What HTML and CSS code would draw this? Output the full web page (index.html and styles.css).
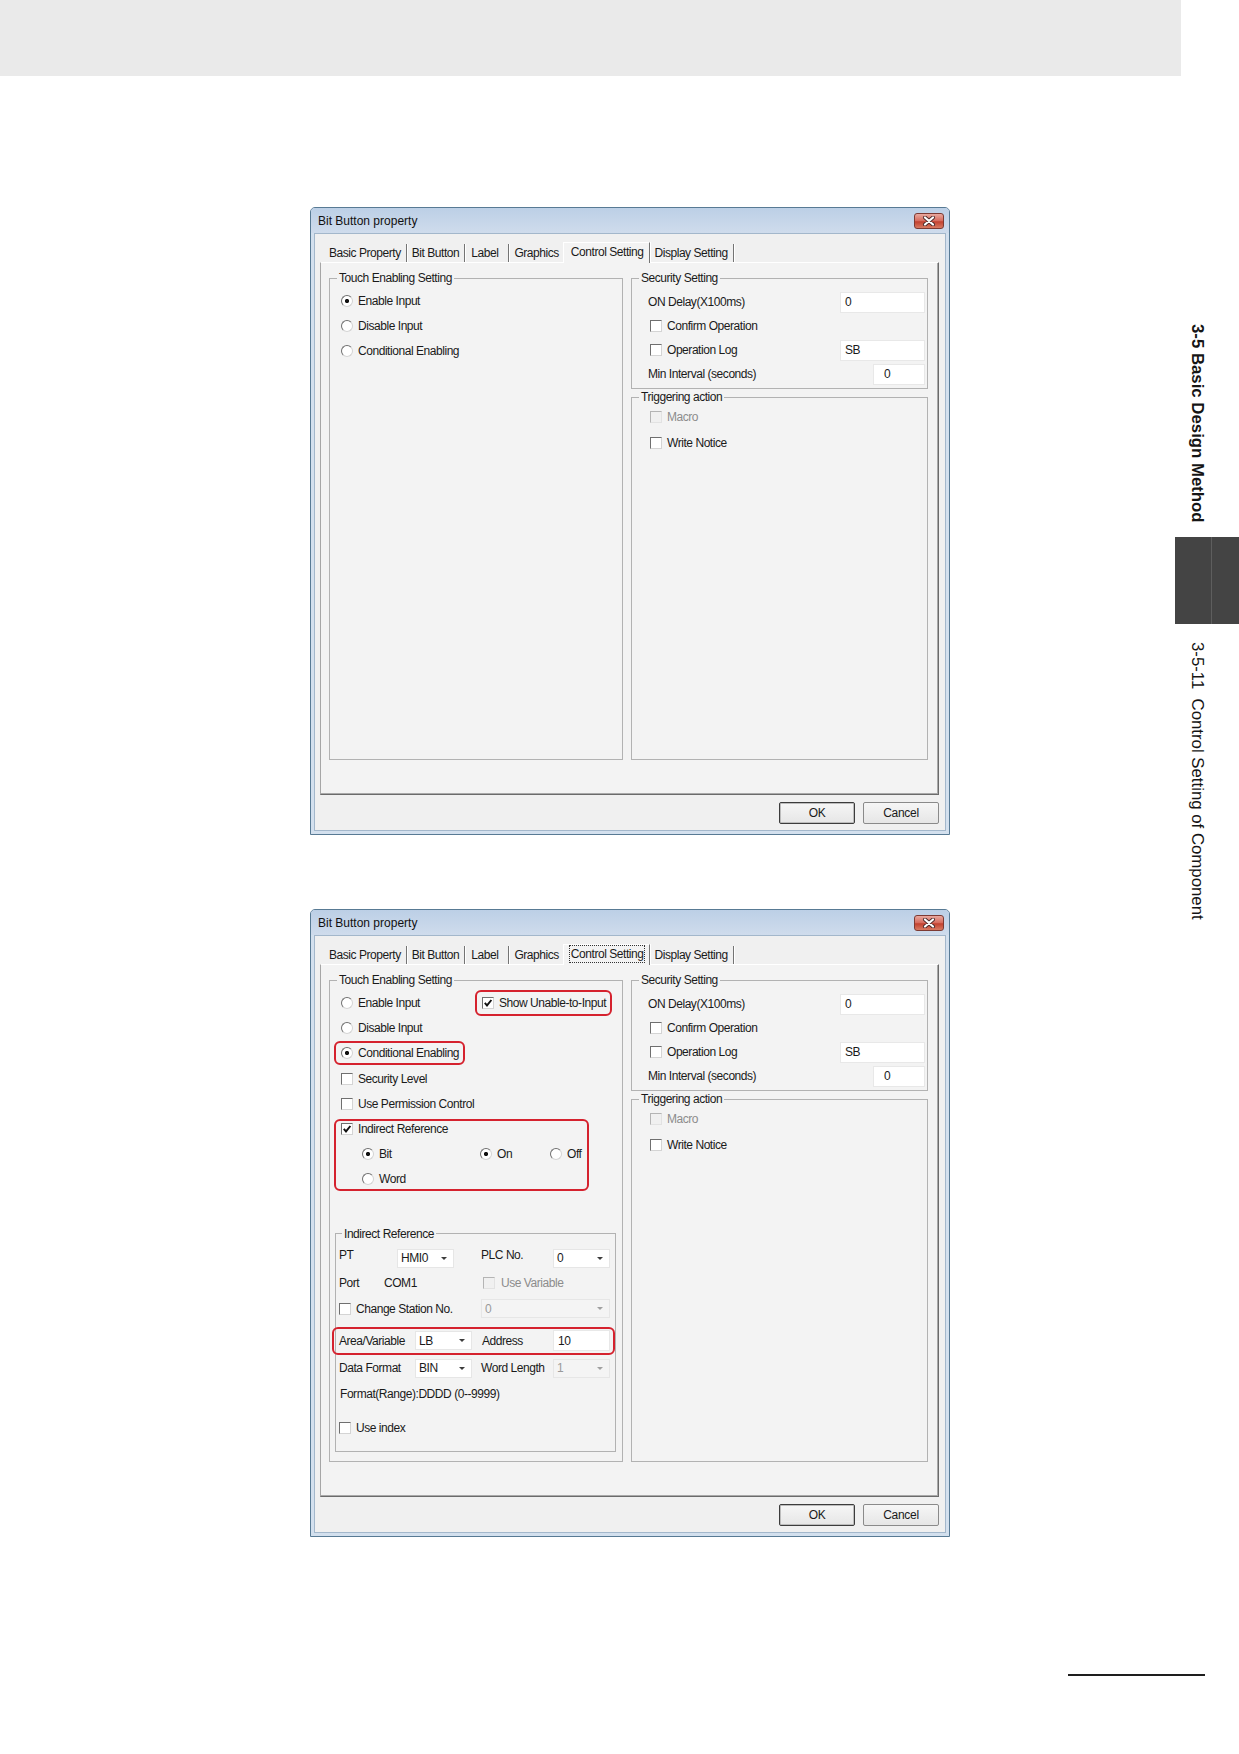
FILE: index.html
```html
<!DOCTYPE html>
<html lang="en">
<head>
    <meta charset="UTF-8">
    <title>3-5-11 Control Setting of Component</title>
    <link rel="stylesheet" href="styles.css">
</head>
<body>

    <div class="top-band"></div>

    <div class="page">
        <div class="main">

            <!-- Bit Button property: default state -->
            <div class="dialog">
                <div class="titlebar">
                    <span>Bit Button property</span>
                    <span class="close-btn">
                        <svg width="14" height="10" viewBox="0 0 14 10">
                            <path d="M3 1.5 L11 8.5 M11 1.5 L3 8.5" stroke="#4a2a2a" stroke-width="4" stroke-linecap="round"/>
                            <path d="M3 1.5 L11 8.5 M11 1.5 L3 8.5" stroke="#fff" stroke-width="2.2" stroke-linecap="round"/>
                        </svg>
                    </span>
                </div>
                <div class="dlg-body">
                    <div class="tabs">
                        <span class="tab">Basic Property</span>
                        <span class="tab">Bit Button</span>
                        <span class="tab t-label">Label</span>
                        <span class="tab">Graphics</span>
                        <span class="tab active"><span class="tab-label">Control Setting</span></span>
                        <span class="tab">Display Setting</span>
                    </div>
                    <div class="panel">
                        <fieldset class="group g-touch">
                            <legend>Touch Enabling Setting</legend>
                            <div class="gc">
                                <div class="row"><span class="rb on"></span>Enable Input</div>
                                <div class="row"><span class="rb"></span>Disable Input</div>
                                <div class="row"><span class="rb"></span>Conditional Enabling</div>
                            </div>
                        </fieldset>
                        <div class="right-col">
                            <fieldset class="group g-sec">
                                <legend>Security Setting</legend>
                                <div class="gc sec">
                                    <div class="row"><span class="lbl-sec">ON Delay(X100ms)</span><span class="field f-wide">0</span></div>
                                    <div class="row"><span class="cb"></span>Confirm Operation</div>
                                    <div class="row"><span class="lbl-sec"><span class="cb"></span>Operation Log</span><span class="field f-wide">SB</span></div>
                                    <div class="row"><span class="lbl-min">Min Interval (seconds)</span><span class="field f-min">0</span></div>
                                </div>
                            </fieldset>
                            <fieldset class="group g-trg">
                                <legend>Triggering action</legend>
                                <div class="gc trg">
                                    <div class="row off"><span class="cb dis"></span>Macro</div>
                                    <div class="row"><span class="cb"></span>Write Notice</div>
                                </div>
                            </fieldset>
                        </div>
                    </div>
                    <div class="buttons">
                        <span class="btn default">OK</span>
                        <span class="btn">Cancel</span>
                    </div>
                </div>
            </div>

            <!-- Bit Button property: conditional enabling -->
            <div class="dialog">
                <div class="titlebar">
                    <span>Bit Button property</span>
                    <span class="close-btn">
                        <svg width="14" height="10" viewBox="0 0 14 10">
                            <path d="M3 1.5 L11 8.5 M11 1.5 L3 8.5" stroke="#4a2a2a" stroke-width="4" stroke-linecap="round"/>
                            <path d="M3 1.5 L11 8.5 M11 1.5 L3 8.5" stroke="#fff" stroke-width="2.2" stroke-linecap="round"/>
                        </svg>
                    </span>
                </div>
                <div class="dlg-body">
                    <div class="tabs">
                        <span class="tab">Basic Property</span>
                        <span class="tab">Bit Button</span>
                        <span class="tab t-label">Label</span>
                        <span class="tab">Graphics</span>
                        <span class="tab active"><span class="tab-label focus">Control Setting</span></span>
                        <span class="tab">Display Setting</span>
                    </div>
                    <div class="panel">
                        <fieldset class="group g-touch">
                            <legend>Touch Enabling Setting</legend>
                            <div class="gc">
                                <div class="row">
                                    <span class="opt"><span class="rb"></span>Enable Input</span>
                                    <span class="hl hl-show"><span class="cb"><svg viewBox="0 0 10 10"><path d="M1.8 4.8 L4 7.4 L8.4 2" stroke="#111" stroke-width="1.9" fill="none"/></svg></span>Show Unable-to-Input</span>
                                </div>
                                <div class="row"><span class="rb"></span>Disable Input</div>
                                <div class="row"><span class="hl hl-cond"><span class="rb on"></span>Conditional Enabling</span></div>
                                <div class="row"><span class="cb"></span>Security Level</div>
                                <div class="row"><span class="cb"></span>Use Permission Control</div>
                                <div class="hl hl-block">
                                    <div class="row"><span class="cb"><svg viewBox="0 0 10 10"><path d="M1.8 4.8 L4 7.4 L8.4 2" stroke="#111" stroke-width="1.9" fill="none"/></svg></span>Indirect Reference</div>
                                    <div class="row sub">
                                        <span class="opt-bit"><span class="rb on"></span>Bit</span>
                                        <span class="opt-on"><span class="rb on"></span>On</span>
                                        <span><span class="rb"></span>Off</span>
                                    </div>
                                    <div class="row sub"><span class="rb"></span>Word</div>
                                </div>

                                <fieldset class="group g-ref">
                                    <legend>Indirect Reference</legend>
                                    <div class="ref">
                                        <div class="rrow r-pt">
                                            <span class="lbl lbl-pt">PT</span>
                                            <span class="combo">HMI0</span>
                                            <span class="lbl lbl-plc">PLC No.</span>
                                            <span class="combo">0</span>
                                        </div>
                                        <div class="rrow r-port">
                                            <span class="lbl-port">Port</span>
                                            <span class="lbl-com">COM1</span>
                                            <span class="off"><span class="cb dis"></span>Use Variable</span>
                                        </div>
                                        <div class="rrow r-station">
                                            <span class="lbl-station"><span class="cb"></span>Change Station No.</span>
                                            <span class="combo dis c-station">0</span>
                                        </div>
                                        <div class="rrow hl r-area">
                                            <span class="lbl-area">Area/Variable</span>
                                            <span class="combo">LB</span>
                                            <span class="lbl-addr">Address</span>
                                            <span class="field f-addr">10</span>
                                        </div>
                                        <div class="rrow r-data">
                                            <span class="lbl-area">Data Format</span>
                                            <span class="combo">BIN</span>
                                            <span class="lbl-wl">Word Length</span>
                                            <span class="combo dis">1</span>
                                        </div>
                                        <div class="rrow r-fmt">Format(Range):DDDD (0--9999)</div>
                                        <div class="rrow r-index"><span class="cb"></span>Use index</div>
                                    </div>
                                </fieldset>
                            </div>
                        </fieldset>
                        <div class="right-col">
                            <fieldset class="group g-sec">
                                <legend>Security Setting</legend>
                                <div class="gc sec">
                                    <div class="row"><span class="lbl-sec">ON Delay(X100ms)</span><span class="field f-wide">0</span></div>
                                    <div class="row"><span class="cb"></span>Confirm Operation</div>
                                    <div class="row"><span class="lbl-sec"><span class="cb"></span>Operation Log</span><span class="field f-wide">SB</span></div>
                                    <div class="row"><span class="lbl-min">Min Interval (seconds)</span><span class="field f-min">0</span></div>
                                </div>
                            </fieldset>
                            <fieldset class="group g-trg">
                                <legend>Triggering action</legend>
                                <div class="gc trg">
                                    <div class="row off"><span class="cb dis"></span>Macro</div>
                                    <div class="row"><span class="cb"></span>Write Notice</div>
                                </div>
                            </fieldset>
                        </div>
                    </div>
                    <div class="buttons">
                        <span class="btn default">OK</span>
                        <span class="btn">Cancel</span>
                    </div>
                </div>
            </div>

        </div>

        <!-- Chapter index on the page edge -->
        <div class="side">
            <div class="side-title">3-5 Basic Design Method</div>
            <div class="side-mark"></div>
            <div class="side-sub">3-5-11  Control Setting of Component</div>
        </div>
    </div>

    <div class="footer">
        <div class="footer-rule"></div>
    </div>

</body>
</html>
```

FILE: styles.css
```css
/* Page */
body {
    margin: 0;
    font-family: "Liberation Sans", Arial, sans-serif;
    color: #1a1a1a;
    background: #fff;
}

.top-band {
    width: 1181px;
    height: 76px;
    background: #eaeaea;
}

.page {
    display: flex;
}

.main {
    width: 1175px;
    padding-top: 131px;
}

/* Chapter index */
.side {
    width: 64px;
    padding-top: 248px;
    display: flex;
    flex-direction: column;
}

.side-title,
.side-sub {
    align-self: flex-start;
    writing-mode: vertical-rl;
    font-size: 16.8px;
    line-height: 20px;
    margin-left: 12px;
    color: #151515;
    white-space: pre;
}

.side-title {
    font-weight: bold;
}

.side-mark {
    height: 87px;
    margin: 14px 0 18px;
    background: linear-gradient(to right, #444 36px, #5e5e5e 36px, #5e5e5e 37px, #444 37px);
}

.footer {
    padding: 137px 0 0 1068px;
}

.footer-rule {
    width: 137px;
    height: 2px;
    background: #1e1e1e;
}

/* Dialog window */
.dialog {
    width: 640px;
    height: 628px;
    margin-left: 310px;
    box-sizing: border-box;
    border: 1px solid #587a94;
    border-radius: 5px 5px 0 0;
    background: #d3e0ee;
    padding: 0 3px 3px;
    display: flex;
    flex-direction: column;
    font-size: 12px;
    letter-spacing: -0.45px;
}

.dialog + .dialog {
    margin-top: 74px;
}

.titlebar {
    height: 25px;
    margin: 0 -3px;
    padding: 0 5px 0 7px;
    display: flex;
    align-items: center;
    justify-content: space-between;
    border-radius: 4px 4px 0 0;
    background: linear-gradient(to bottom, #bccfe6, #cfdcec);
    font-size: 12px;
    letter-spacing: 0;
    color: #111;
}

.close-btn {
    width: 30px;
    height: 16px;
    box-sizing: border-box;
    display: flex;
    align-items: center;
    justify-content: center;
    border: 1px solid #7d3a33;
    border-radius: 3px;
    background: linear-gradient(to bottom, #e9a99f, #d6695b 50%, #c2412f 55%, #d87a62);
}

.dlg-body {
    flex: 1;
    background: #f0f0f0;
    border: 1px solid #a3b7cb;
    padding: 8px 6px 6px 5px;
    display: flex;
    flex-direction: column;
}

/* Tabs */
.tabs {
    display: flex;
    align-items: flex-end;
    height: 20px;
    padding-left: 4px;
}

.tab {
    height: 18px;
    display: flex;
    align-items: center;
    padding: 0 5px;
    border-right: 1px solid #747474;
    box-shadow: 1px 0 0 #fff;
    white-space: nowrap;
}

.tab.t-label {
    padding: 0 10px 0 6px;
}

.tab.active {
    height: 21px;
    margin: 0 -1px -1px -2px;
    padding: 0 6px 3px 7px;
    box-sizing: border-box;
    border-left: 1px solid #fff;
    border-top: 1px solid #fff;
    background: #f3f3f3;
    position: relative;
    z-index: 1;
}

.tab-label.focus {
    outline: 1px dotted #333;
    outline-offset: 1px;
}

.panel {
    height: 533px;
    box-sizing: border-box;
    border: 1px solid;
    border-color: #ffffff #6b6b6b #6b6b6b #a6a6a6;
    box-shadow: inset -1px -1px 0 #a9a9a9;
    background: #f3f3f3;
    padding: 8px 10px 0 8px;
    display: flex;
    gap: 8px;
}

/* Group boxes */
.group {
    margin: 0;
    padding: 0;
    min-width: 0;
    box-sizing: border-box;
    border: 1px solid #b2b2b2;
}

.group legend {
    margin-left: 7px;
    padding: 0 2px;
    line-height: 14px;
}

.g-touch {
    width: 294px;
    height: 489px;
}

.right-col {
    width: 297px;
    display: flex;
    flex-direction: column;
    gap: 1px;
}

.g-sec {
    height: 118px;
}

.g-trg {
    height: 370px;
}

.gc {
    padding: 3px 0 0 11px;
}

.gc.sec {
    padding: 5px 0 0 16px;
}

.gc.trg {
    padding: 0 0 0 16px;
}

.row {
    display: flex;
    align-items: center;
    height: 25.3px;
    white-space: nowrap;
}

.sec .row {
    height: 24px;
}

.trg .row {
    height: 26px;
}

.sec .cb,
.trg .cb {
    margin-left: 2px;
}

.off {
    color: #8c8c8c;
}

/* Check boxes and radio buttons */
.cb,
.rb {
    flex: none;
    width: 12px;
    height: 12px;
    box-sizing: border-box;
    margin-right: 5px;
    border: 1px solid;
    border-color: #6f6f6f #d4d4d4 #d4d4d4 #6f6f6f;
    background: #fff;
    display: inline-flex;
    vertical-align: middle;
}

.cb svg {
    width: 10px;
    height: 10px;
}

.rb {
    border-radius: 50%;
}

.rb.on {
    background: radial-gradient(circle, #111 0, #111 1.8px, #fff 2.4px);
}

.cb.dis {
    background: #f0f0f0;
    border-color: #b4b4b4 #e2e2e2 #e2e2e2 #b4b4b4;
}

/* Edit boxes */
.field {
    height: 21px;
    box-sizing: border-box;
    background: #fff;
    border: 1px solid #e8e8e8;
    display: flex;
    align-items: center;
    padding-left: 4px;
}

.lbl-sec {
    width: 192px;
    display: flex;
    align-items: center;
}

.lbl-min {
    width: 225px;
}

.f-wide {
    width: 85px;
}

.f-min {
    width: 52px;
    padding-left: 10px;
}

/* Highlight frames */
.hl {
    border: 2px solid #d5222e;
    border-radius: 6px;
    box-sizing: border-box;
}

.opt {
    width: 134px;
    display: flex;
    align-items: center;
}

.hl-show {
    width: 137px;
    height: 26px;
    display: flex;
    align-items: center;
    padding-left: 5px;
}

.hl-cond {
    height: 24px;
    margin-left: -7px;
    padding: 0 4px 0 5px;
    display: flex;
    align-items: center;
}

.hl-block {
    width: 255px;
    height: 72px;
    margin: 2.5px 0 0 -7px;
    padding-left: 5px;
}

.hl-block .row:first-child {
    margin-top: -5px;
}

.row.sub {
    padding-left: 21px;
}

.opt-bit {
    width: 118px;
    display: flex;
    align-items: center;
}

.opt-on {
    width: 70px;
    display: flex;
    align-items: center;
}

.row.sub span {
    display: flex;
    align-items: center;
}

/* Indirect reference block */
.g-ref {
    width: 281px;
    margin: 36px 0 0 -6px;
}

.g-ref legend {
    margin-left: 6px;
}

.ref {
    padding: 4px 5px 11px 3px;
}

.rrow {
    display: flex;
    align-items: center;
    white-space: nowrap;
}

.r-pt {
    height: 25px;
    align-items: flex-start;
}

.r-pt .lbl {
    margin-top: 3px;
    line-height: 14px;
}

.r-pt .combo {
    margin-top: 4px;
}

.lbl-pt {
    width: 58px;
}

.lbl-plc {
    width: 72px;
    margin-left: 27px;
}

.r-port {
    height: 27px;
}

.lbl-port {
    width: 45px;
}

.lbl-com {
    width: 99px;
}

.r-port .off {
    display: flex;
    align-items: center;
}

.r-port .cb {
    margin-right: 6px;
}

.r-station {
    height: 24px;
}

.lbl-station {
    width: 142px;
    display: flex;
    align-items: center;
}

.r-area {
    height: 28px;
    margin: 6px 0 0 -7px;
    width: 283px;
    padding-left: 5px;
}

.lbl-area {
    width: 76px;
}

.lbl-addr {
    width: 71px;
    margin-left: 10px;
}

.f-addr {
    width: 57px;
}

.r-data {
    height: 27px;
}

.lbl-wl {
    width: 72px;
    margin-left: 9px;
}

.r-fmt {
    height: 24px;
    padding-left: 1px;
}

.r-index {
    height: 24px;
    margin-top: 10px;
}

/* Combo boxes */
.combo {
    width: 57px;
    height: 19px;
    box-sizing: border-box;
    background: #fff;
    border: 1px solid #e6e6e6;
    display: flex;
    align-items: center;
    justify-content: space-between;
    padding: 0 6px 0 3px;
}

.combo::after {
    content: "";
    width: 0;
    height: 0;
    border-left: 3px solid transparent;
    border-right: 3px solid transparent;
    border-top: 3px solid #3c3c3c;
}

.combo.dis {
    background: #f4f4f4;
    color: #9a9a9a;
}

.combo.dis::after {
    border-top-color: #a0a0a0;
}

.combo.c-station {
    width: 129px;
}

/* Push buttons */
.buttons {
    display: flex;
    justify-content: flex-end;
    gap: 8px;
    margin-top: 7px;
}

.btn {
    width: 76px;
    height: 22px;
    box-sizing: border-box;
    display: flex;
    align-items: center;
    justify-content: center;
    border: 1px solid #8a8a8a;
    border-radius: 2px;
    background: linear-gradient(to bottom, #f6f6f6, #e6e6e6);
    font-size: 12px;
    letter-spacing: -0.3px;
}

.btn.default {
    border-color: #3c3c3c;
    box-shadow: inset 0 0 0 1px #bcbcbc;
}
```
